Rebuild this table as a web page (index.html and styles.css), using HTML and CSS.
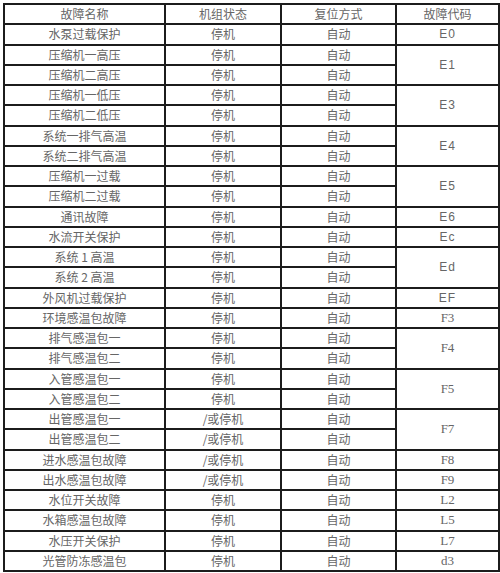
FILE: index.html
```html
<!DOCTYPE html>
<html lang="zh-CN">
<head>
<meta charset="utf-8">
<title>故障代码表</title>
<link rel="stylesheet" href="styles.css">
</head>
<body>
<table class="fault-table">
  <colgroup>
    <col class="c-name"><col class="c-state"><col class="c-reset"><col class="c-code">
  </colgroup>
  <tr><td>故障名称</td><td>机组状态</td><td>复位方式</td><td>故障代码</td></tr>
  <tr><td>水泵过载保护</td><td>停机</td><td>自动</td><td class="code sans">E0</td></tr>
  <tr><td>压缩机一高压</td><td>停机</td><td>自动</td><td class="code sans" rowspan="2">E1</td></tr>
  <tr><td>压缩机二高压</td><td>停机</td><td>自动</td></tr>
  <tr><td>压缩机一低压</td><td>停机</td><td>自动</td><td class="code sans" rowspan="2">E3</td></tr>
  <tr><td>压缩机二低压</td><td>停机</td><td>自动</td></tr>
  <tr><td>系统一排气高温</td><td>停机</td><td>自动</td><td class="code sans" rowspan="2">E4</td></tr>
  <tr><td>系统二排气高温</td><td>停机</td><td>自动</td></tr>
  <tr><td>压缩机一过载</td><td>停机</td><td>自动</td><td class="code sans" rowspan="2">E5</td></tr>
  <tr><td>压缩机二过载</td><td>停机</td><td>自动</td></tr>
  <tr><td>通讯故障</td><td>停机</td><td>自动</td><td class="code sans">E6</td></tr>
  <tr><td>水流开关保护</td><td>停机</td><td>自动</td><td class="code sans">Ec</td></tr>
  <tr><td>系统 1 高温</td><td>停机</td><td>自动</td><td class="code sans" rowspan="2">Ed</td></tr>
  <tr><td>系统 2 高温</td><td>停机</td><td>自动</td></tr>
  <tr><td>外风机过载保护</td><td>停机</td><td>自动</td><td class="code sans">EF</td></tr>
  <tr><td>环境感温包故障</td><td>停机</td><td>自动</td><td class="code serif">F3</td></tr>
  <tr><td>排气感温包一</td><td>停机</td><td>自动</td><td class="code serif" rowspan="2">F4</td></tr>
  <tr><td>排气感温包二</td><td>停机</td><td>自动</td></tr>
  <tr><td>入管感温包一</td><td>停机</td><td>自动</td><td class="code serif" rowspan="2">F5</td></tr>
  <tr><td>入管感温包二</td><td>停机</td><td>自动</td></tr>
  <tr><td>出管感温包一</td><td>/或停机</td><td>自动</td><td class="code serif" rowspan="2">F7</td></tr>
  <tr><td>出管感温包二</td><td>/或停机</td><td>自动</td></tr>
  <tr><td>进水感温包故障</td><td>/或停机</td><td>自动</td><td class="code serif">F8</td></tr>
  <tr><td>出水感温包故障</td><td>/或停机</td><td>自动</td><td class="code serif">F9</td></tr>
  <tr><td>水位开关故障</td><td>停机</td><td>自动</td><td class="code serif">L2</td></tr>
  <tr><td>水箱感温包故障</td><td>停机</td><td>自动</td><td class="code serif">L5</td></tr>
  <tr><td>水压开关保护</td><td>停机</td><td>自动</td><td class="code serif">L7</td></tr>
  <tr><td>光管防冻感温包</td><td>停机</td><td>自动</td><td class="code serif">d3</td></tr>
</table>
</body>
</html>
```
FILE: styles.css
```css
html, body {
  margin: 0;
  padding: 0;
  background: #ffffff;
}

body {
  padding: 3px 0 0 3px;
}

.fault-table {
  border-collapse: collapse;
  table-layout: fixed;
  width: 495px;
  font-family: "Noto Sans CJK SC", "Noto Sans", sans-serif;
  font-size: 12px;
  color: #666666;
}

.c-name { width: 161px; }
.c-state { width: 116px; }
.c-reset { width: 115px; }
.c-code { width: 103px; }

.fault-table tr {
  height: 20.25px;
}

.fault-table td {
  border: 2px solid #1c1c1c;
  padding: 0;
  text-align: center;
  vertical-align: middle;
  line-height: 16px;
  white-space: nowrap;
  overflow: hidden;
}

.code {
  font-size: 12px;
}

.sans {
  font-family: "Liberation Sans", "DejaVu Sans", sans-serif;
  letter-spacing: 1px;
}

.serif {
  font-family: "Liberation Serif", "DejaVu Serif", serif;
  font-size: 13px;
}
```
